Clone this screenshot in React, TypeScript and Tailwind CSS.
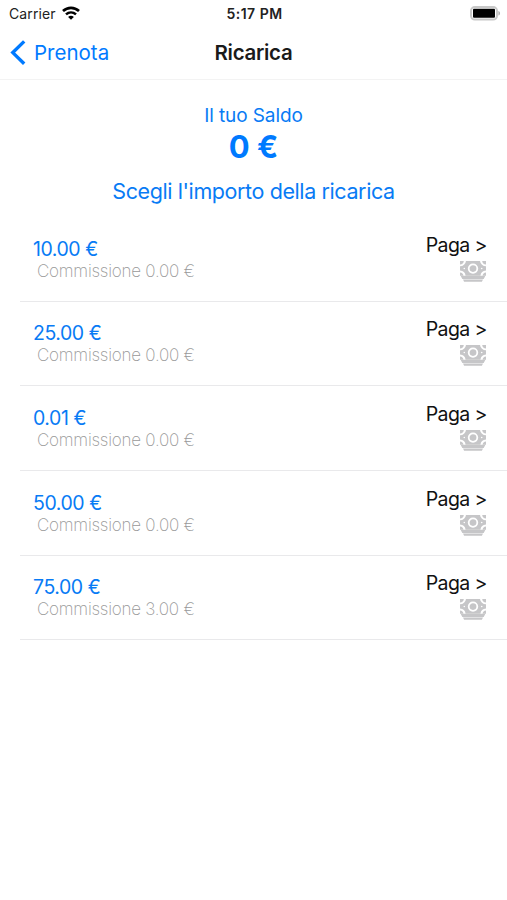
interface TopUp {
  amount: string;
  fee: string;
}

const TOP_UPS: TopUp[] = [
  { amount: '10.00', fee: '0.00' },
  { amount: '25.00', fee: '0.00' },
  { amount: '0.01', fee: '0.00' },
  { amount: '50.00', fee: '0.00' },
  { amount: '75.00', fee: '3.00' },
];

function WifiIcon() {
  return (
    <svg width="18" height="14" viewBox="0 0 18 14" fill="none" className="relative -top-px" aria-hidden="true">
      <path d="M1 5.1C5.6.9 12.4.9 17 5.1" stroke="#000" strokeWidth="2.7" />
      <path d="M4 8.4C6.9 5.7 11.1 5.7 14 8.4" stroke="#000" strokeWidth="2.5" />
      <path d="M9 13.8 6.1 10.9C7.8 9.4 10.2 9.4 11.9 10.9Z" fill="#000" />
    </svg>
  );
}

function BatteryIcon() {
  return (
    <svg width="31" height="15" viewBox="0 0 31 15" aria-hidden="true">
      <rect x="1" y="1" width="26" height="12.6" rx="3.8" fill="#fff" stroke="#c8c8c8" strokeWidth="2" />
      <rect x="3" y="2.8" width="22" height="9" rx="1" fill="#000" />
      <path d="M28.4 5c2.2.7 2.2 3.9 0 4.6Z" fill="#b0b0b0" />
    </svg>
  );
}

// Banknote with cut corners on top of a small stack
function CashIcon() {
  return (
    <svg width="26" height="21" viewBox="0 0 26 21" aria-hidden="true">
      <g fill="#c6c6c8">
        <path d="M6 0h14A6 6 0 0 0 26 5.3v4.1a6 6 0 0 0-5.6 5.3H5.6A6 6 0 0 0 0 9.4V5.3A6 6 0 0 0 6 0Z" />
        <path d="M0 0h3.8A3.8 3.8 0 0 1 0 3.4ZM26 0h-3.8A3.8 3.8 0 0 0 26 3.4ZM0 14.7v-3.3a3.8 3.8 0 0 1 3.5 3.3ZM26 14.7v-3.3a3.8 3.8 0 0 0-3.5 3.3Z" />
        <path d="M0.6 14.7h24.8l-1.7 3.2H2.3ZM3 18.6h20l-1.1 2.2H4.1Z" />
      </g>
      <ellipse cx="13" cy="7.6" rx="4.3" ry="4.2" fill="none" stroke="#fff" strokeWidth="1.8" />
      <circle cx="4.3" cy="7.5" r="0.8" fill="#fff" />
      <circle cx="21.7" cy="7.5" r="0.8" fill="#fff" />
    </svg>
  );
}

function StatusBar() {
  return (
    <div className="grid h-[27px] grid-cols-3 items-center pl-[9px] pr-[6px] text-[14px] text-[#222]">
      <div className="flex items-center gap-[6px]">
        <span className="tracking-[0.1px]">Carrier</span>
        <WifiIcon />
      </div>
      <span className="-ml-px text-center font-semibold tracking-[0.5px]">5:17 PM</span>
      <div className="flex justify-end">
        <BatteryIcon />
      </div>
    </div>
  );
}

function NavBar() {
  return (
    <header className="grid h-[53px] grid-cols-3 items-center border-b border-[#f3f3f3] pl-[10px] pr-[10px] text-[20.5px]">
      <button className="flex items-center gap-2 text-[#007aff]">
        <svg width="16" height="26" viewBox="0 0 16 26" fill="none" aria-hidden="true">
          <path d="M14.2 1.4 2.8 12.6l11.4 11.2" stroke="#007aff" strokeWidth="3.4" />
        </svg>
        <span>Prenota</span>
      </button>
      <h1 className="text-center font-semibold tracking-[-0.3px] text-[#1a1a1a]">Ricarica</h1>
    </header>
  );
}

function TopUpRow({ amount, fee }: TopUp) {
  return (
    <li className="ml-5 flex h-[84.7px] justify-between border-b border-[#e9e9eb] pl-[13px] pr-[21px]">
      <div className="pt-[19.5px]">
        <p className="text-[19.5px] leading-[24px] tracking-[-0.45px] text-[#087bf5]">{amount} €</p>
        <p className="pl-[4px] text-[17px] font-extralight leading-[21px] tracking-[-0.24px] text-[#999]">
          Commissione {fee} €
        </p>
      </div>
      <button className="flex flex-col items-end pt-[15.5px]">
        <span className="-mr-[0.8px] text-[19.5px] leading-[24px] tracking-[-0.6px] text-[#111]">Paga &gt;</span>
        <span className="mt-[4px]">
          <CashIcon />
        </span>
      </button>
    </li>
  );
}

export default function App() {
  return (
    <div className="h-[900px] w-full overflow-hidden bg-white font-[Inter,sans-serif] whitespace-nowrap">
      <StatusBar />
      <NavBar />
      <section className="flex h-[137px] flex-col items-center pt-[24px] text-[#087bf5]">
        <p className="text-[19px] leading-[24px] tracking-[-0.1px]">Il tuo Saldo</p>
        <p className="text-[31px] font-bold leading-[38px] text-[#007aff]">0 €</p>
        <h2 className="mt-[12px] text-[21.5px] leading-[26px] tracking-[-0.4px]">
          Scegli l'importo della ricarica
        </h2>
      </section>
      <ul>
        {TOP_UPS.map((item) => (
          <TopUpRow key={item.amount} {...item} />
        ))}
      </ul>
    </div>
  );
}
